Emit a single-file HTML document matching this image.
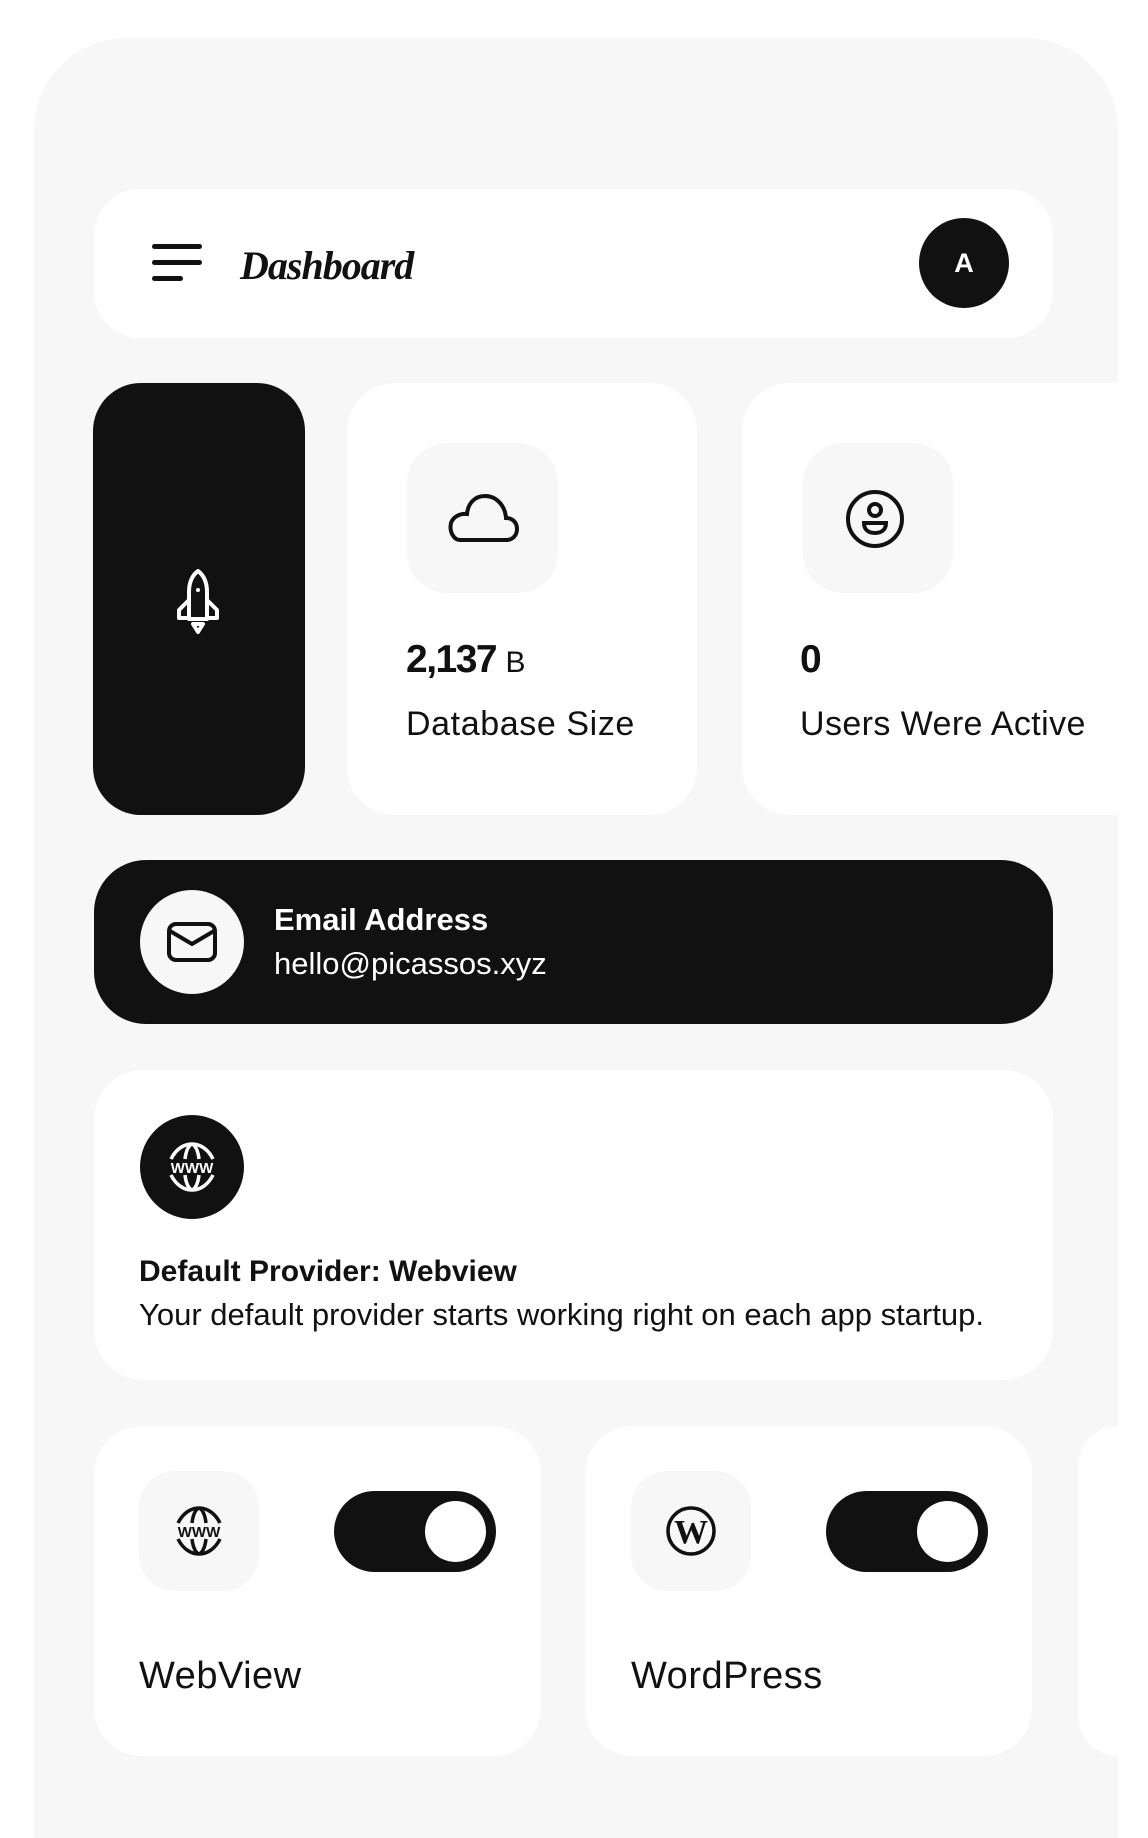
<!DOCTYPE html>
<html><head><meta charset="utf-8"><style>
*{margin:0;padding:0;box-sizing:border-box}
body{width:1148px;height:1792px;background:#fff;position:relative;overflow:hidden;font-family:"Liberation Sans",sans-serif;color:#111}
.a{position:absolute}
.panel{left:34px;top:38px;width:1084px;height:1800px;background:#f7f7f7;border-radius:92px 92px 0 0}
.w{background:#fff}
.k{background:#111}
.ib{background:#f7f7f7;border-radius:40px}
</style></head><body>
<div class="a panel"></div>
<div class="a w" style="left:94px;top:189px;width:959px;height:149px;border-radius:46px"></div>
<div class="a k" style="left:152px;top:244px;width:50px;height:5px;border-radius:3px"></div>
<div class="a k" style="left:152px;top:260px;width:50px;height:5px;border-radius:3px"></div>
<div class="a k" style="left:152px;top:276px;width:31px;height:5px;border-radius:3px"></div>
<div class="a" style="left:240px;top:243px;font-family:'Liberation Serif',serif;font-style:italic;font-weight:bold;font-size:40px;line-height:46px;letter-spacing:-1px">Dashboard</div>
<div class="a k" style="left:919px;top:218px;width:90px;height:90px;border-radius:50%;color:#fff;font-weight:bold;font-size:27px;line-height:90px;text-align:center">A</div>

<div class="a k" style="left:93px;top:383px;width:212px;height:432px;border-radius:48px"></div>
<svg class="a" style="left:174px;top:566px" width="48" height="70" viewBox="0 0 48 70" fill="none" stroke="#fff" stroke-width="4" stroke-linejoin="round" stroke-linecap="round">
<path d="M24 5 C16 11 15 20 15 26 V53 H33 V26 C33 20 32 11 24 5Z"/>
<path d="M15 34 L5 44 V52 H15"/><path d="M33 34 L43 44 V52 H33"/>
<path d="M19 58 L24 66 L29 58Z"/><circle cx="24" cy="24" r="2" fill="#fff" stroke="none"/></svg>

<div class="a w" style="left:347px;top:383px;width:350px;height:432px;border-radius:48px"></div>
<div class="a ib" style="left:407px;top:443px;width:151px;height:150px"></div>
<svg class="a" style="left:444px;top:492px" width="76" height="52" viewBox="0 0 76 52" fill="none" stroke="#111" stroke-width="4"><path d="M16 48 H62 C69 48 73 43 73 37 C73 30 68 26 62 26 C61 13 52 4 41 4 C31 4 24 11 23 22 C16 21 9 25 7 31 C5 40 10 48 16 48Z"/></svg>
<div class="a" style="left:406px;top:638px;font-size:39px;font-weight:bold;letter-spacing:-1.5px;line-height:44px">2,137 <span style="font-weight:normal;font-size:30px;letter-spacing:0">B</span></div>
<div class="a" style="left:406px;top:704px;font-size:34px;line-height:40px;letter-spacing:0.6px">Database Size</div>

<div class="a w" style="left:742px;top:383px;width:376px;height:432px;border-radius:48px 0 0 48px"></div>
<div class="a ib" style="left:803px;top:443px;width:150px;height:150px"></div>
<svg class="a" style="left:844px;top:488px" width="62" height="62" viewBox="0 0 62 62" fill="none" stroke="#111" stroke-width="4"><circle cx="31" cy="31" r="27"/><circle cx="31" cy="22" r="6"/><path d="M20 35 H42 C42 42 37 45 31 45 C25 45 20 42 20 35Z"/></svg>
<div class="a" style="left:800px;top:638px;font-size:39px;font-weight:bold;line-height:44px">0</div>
<div class="a" style="left:800px;top:704px;font-size:34px;line-height:40px;letter-spacing:0.4px">Users Were Active</div>

<div class="a k" style="left:94px;top:860px;width:959px;height:164px;border-radius:52px"></div>
<div class="a" style="left:140px;top:890px;width:104px;height:104px;border-radius:50%;background:#f7f7f7"></div>
<svg class="a" style="left:166px;top:921px" width="52" height="42" viewBox="0 0 52 42" fill="none" stroke="#111" stroke-width="4" stroke-linejoin="round"><rect x="3" y="3" width="46" height="36" rx="7"/><path d="M4 10 L26 23 L48 10"/></svg>
<div class="a" style="left:274px;top:902px;color:#fff;font-size:31px;font-weight:bold;line-height:36px">Email Address</div>
<div class="a" style="left:274px;top:946px;color:#fff;font-size:31px;line-height:36px">hello@picassos.xyz</div>

<div class="a w" style="left:94px;top:1070px;width:959px;height:310px;border-radius:50px"></div>
<div class="a k" style="left:140px;top:1115px;width:104px;height:104px;border-radius:50%"></div>
<svg class="a" style="left:166px;top:1141px" width="52" height="52" viewBox="0 0 52 52" fill="none" stroke="#fff" stroke-width="3.5"><path d="M5 18 C10 8 18 3 26 3 C34 3 42 8 47 18 M5 34 C10 44 18 49 26 49 C34 49 42 44 47 34 M19 18 C20 9 23 4 26 3 C29 4 32 9 33 18 M19 34 C20 43 23 48 26 49 C29 48 32 43 33 34"/><text x="26" y="32" fill="#fff" stroke="none" font-family="Liberation Sans" font-weight="bold" font-size="15" text-anchor="middle">WWW</text></svg>
<div class="a" style="left:139px;top:1255px;font-size:30px;font-weight:bold;line-height:34px">Default Provider: Webview</div>
<div class="a" style="left:139px;top:1298px;font-size:31px;line-height:34px">Your default provider starts working right on each app startup.</div>

<div class="a w" style="left:94px;top:1426px;width:447px;height:330px;border-radius:48px"></div>
<div class="a ib" style="left:139px;top:1471px;width:120px;height:120px;border-radius:36px"></div>
<svg class="a" style="left:173px;top:1505px" width="52" height="52" viewBox="0 0 52 52" fill="none" stroke="#111" stroke-width="3.5"><path d="M5 18 C10 8 18 3 26 3 C34 3 42 8 47 18 M5 34 C10 44 18 49 26 49 C34 49 42 44 47 34 M19 18 C20 9 23 4 26 3 C29 4 32 9 33 18 M19 34 C20 43 23 48 26 49 C29 48 32 43 33 34"/><text x="26" y="32" fill="#111" stroke="none" font-family="Liberation Sans" font-weight="bold" font-size="15" text-anchor="middle">WWW</text></svg>
<div class="a k" style="left:334px;top:1491px;width:162px;height:81px;border-radius:41px"></div>
<div class="a w" style="left:425px;top:1501px;width:61px;height:61px;border-radius:50%"></div>
<div class="a" style="left:139px;top:1654px;font-size:38px;line-height:44px;letter-spacing:0.5px">WebView</div>

<div class="a w" style="left:585px;top:1426px;width:447px;height:330px;border-radius:48px"></div>
<div class="a ib" style="left:631px;top:1471px;width:120px;height:120px;border-radius:36px"></div>
<svg class="a" style="left:665px;top:1505px" width="52" height="52" viewBox="0 0 52 52"><circle cx="26" cy="26" r="23" fill="none" stroke="#111" stroke-width="3.5"/><text x="26" y="38" fill="#111" font-family="Liberation Serif" font-weight="bold" font-size="34" text-anchor="middle">W</text></svg>
<div class="a k" style="left:826px;top:1491px;width:162px;height:81px;border-radius:41px"></div>
<div class="a w" style="left:917px;top:1501px;width:61px;height:61px;border-radius:50%"></div>
<div class="a" style="left:631px;top:1654px;font-size:38px;line-height:44px;letter-spacing:0.5px">WordPress</div>

<div class="a w" style="left:1078px;top:1426px;width:40px;height:330px;border-radius:48px 0 0 48px"></div>
</body></html>
